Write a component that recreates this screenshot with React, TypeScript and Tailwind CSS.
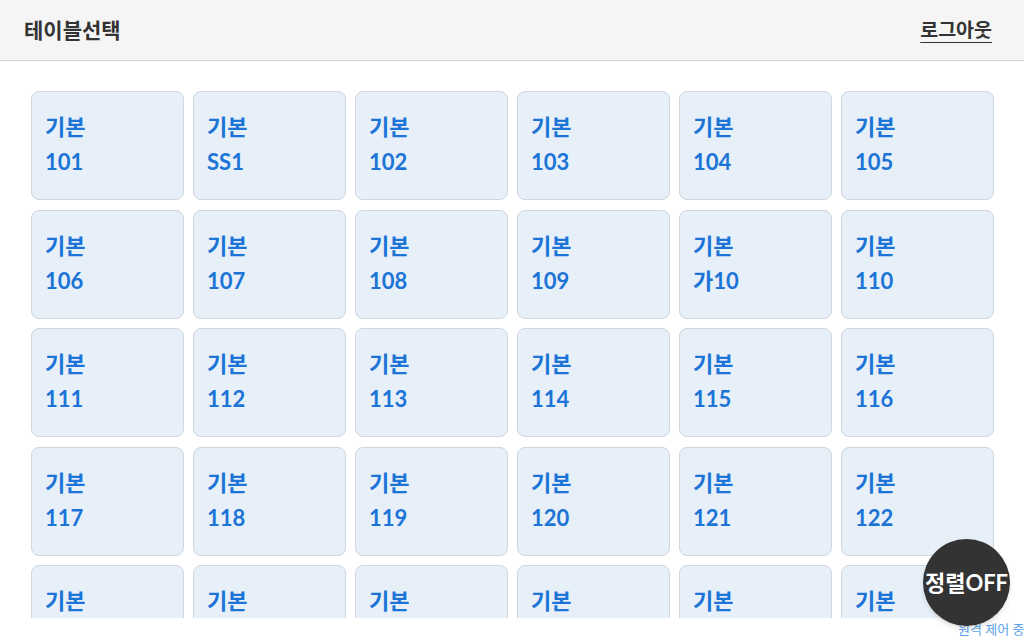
const tables = [
  "101", "SS1", "102", "103", "104", "105",
  "106", "107", "108", "109", "가10", "110",
  "111", "112", "113", "114", "115", "116",
  "117", "118", "119", "120", "121", "122",
  "123", "124", "125", "126", "127", "128",
];

const font = { fontFamily: "Lato, 'Noto Sans CJK KR', sans-serif" };

export default function App() {
  return (
    <div className="relative h-[640px] w-[1024px] overflow-hidden bg-white flex flex-col" style={font}>
      {/* Header */}
      <header className="h-[61px] shrink-0 bg-[#f5f5f5] border-b border-[#d4d4d4] flex items-center justify-between px-6">
        <h1 className="text-[21px] font-bold text-[#333333]">테이블선택</h1>
        <button className="text-[19.5px] font-bold text-[#333333] underline underline-offset-[5px] mr-[8px]">로그아웃</button>
      </header>

      {/* Table grid */}
      <main className="h-[557px] shrink-0 overflow-hidden">
        <div className="grid grid-cols-6 gap-x-[9px] gap-y-[9.5px] pl-[31px] pr-[30px] pt-[30px]">
          {tables.map((t, i) => (
            <div
              key={i}
              className="h-[109px] rounded-[8px] border border-[#cfd6df] bg-[#e7eff9] pl-[13px] pt-[17px] text-[22px] font-bold leading-[35px] text-[#1b74d6]"
            >
              <div>기본</div>
              <div>{t}</div>
            </div>
          ))}
        </div>
      </main>

      <div className="flex-1 relative">
        <span className="absolute left-[958px] top-[2px] whitespace-nowrap text-[13px] text-[#5ba3ea]">원격 제어 중</span>
      </div>

      {/* Sort toggle */}
      <button className="absolute left-[923px] top-[539px] h-[87px] w-[87px] rounded-full bg-[#333333] text-white text-[22px] font-bold shadow-md flex items-center justify-center whitespace-nowrap">
        정렬OFF
      </button>
    </div>
  );
}
